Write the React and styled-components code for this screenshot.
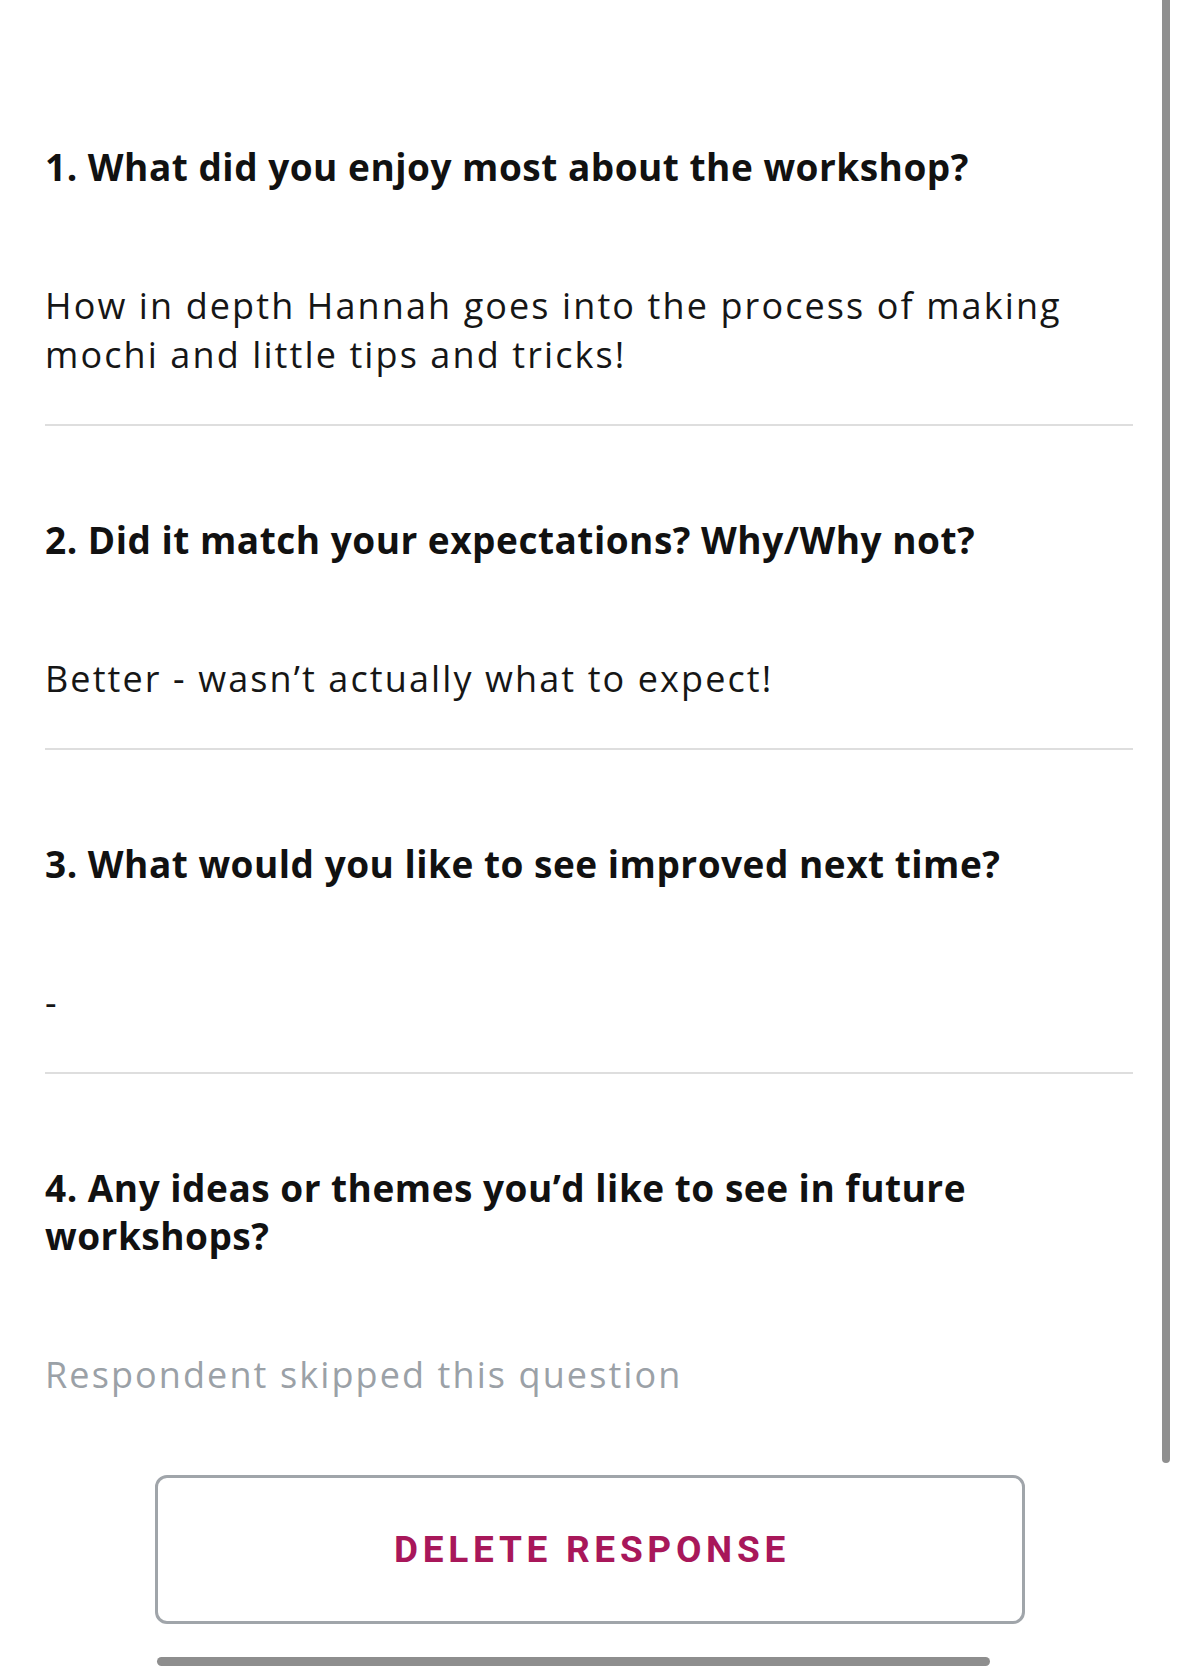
import React from "react";
import styled, { createGlobalStyle } from "styled-components";

const GlobalStyle = createGlobalStyle`
  html, body {
    margin: 0;
    padding: 0;
    background: #ffffff;
  }
  body {
    font-family: "Open Sans", "Noto Sans", sans-serif;
    -webkit-font-smoothing: antialiased;
  }
`;

const Screen = styled.div`
  position: relative;
  width: 1179px;
  min-height: 1675px;
  overflow: hidden;
  background: #ffffff;
  display: flex;
  flex-direction: column;
  padding-top: 53px;
  box-sizing: border-box;
`;

const QuestionList = styled.div`
  display: flex;
  flex-direction: column;
  padding: 0 46px 0 45px;
`;

const Question = styled.section`
  display: flex;
  flex-direction: column;
  padding: 90px 0 ${(p) => (p.$last ? "0" : "45px")};
  border-bottom: ${(p) => (p.$last ? "none" : "2px solid #dedede")};
`;

const Heading = styled.h2`
  margin: 0;
  font-family: "Open Sans", "Noto Sans", sans-serif;
  font-weight: 700;
  font-size: 37px;
  line-height: 48px;
  letter-spacing: 0.5px;
  color: #111111;
`;

const Answer = styled.p`
  margin: 90px 0 0;
  font-family: "Open Sans", "Noto Sans", sans-serif;
  font-weight: 400;
  font-size: 36px;
  line-height: 49px;
  letter-spacing: 2.1px;
  color: ${(p) => (p.$skipped ? "#9ba1a7" : "#161616")};
`;

const Footer = styled.div`
  display: flex;
  justify-content: center;
  margin-top: 76px;
`;

const DeleteButton = styled.button`
  width: 870px;
  height: 149px;
  box-sizing: border-box;
  border: 3px solid #a0a5aa;
  border-radius: 12px;
  background: #ffffff;
  display: flex;
  align-items: center;
  justify-content: center;
  padding: 0 0 0 5px;
  font-family: Roboto, "Open Sans", sans-serif;
  font-weight: 700;
  font-size: 37px;
  letter-spacing: 4.7px;
  color: #a8175a;
  text-transform: uppercase;
  cursor: pointer;
`;

const ScrollIndicator = styled.div`
  position: absolute;
  left: 1162px;
  top: -6px;
  width: 8px;
  height: 1469px;
  border-radius: 4px;
  background: #8f8f8f;
`;

const HomeIndicator = styled.div`
  position: absolute;
  left: 157px;
  top: 1657px;
  width: 833px;
  height: 9px;
  border-radius: 5px;
  background: #8e8e8e;
`;

const questions = [
  {
    q: "1. What did you enjoy most about the workshop?",
    a: "How in depth Hannah goes into the process of making mochi and little tips and tricks!",
  },
  {
    q: "2. Did it match your expectations? Why/Why not?",
    a: "Better - wasn\u2019t actually what to expect!",
  },
  {
    q: "3. What would you like to see improved next time?",
    a: "-",
  },
  {
    q: "4. Any ideas or themes you\u2019d like to see in future workshops?",
    a: "Respondent skipped this question",
    skipped: true,
  },
];

export default function App() {
  return (
    <>
      <GlobalStyle />
      <Screen>
        <QuestionList>
          {questions.map((item, i) => (
            <Question key={i} $last={i === questions.length - 1}>
              <Heading>{item.q}</Heading>
              <Answer $skipped={item.skipped}>{item.a}</Answer>
            </Question>
          ))}
        </QuestionList>
        <Footer>
          <DeleteButton type="button">Delete Response</DeleteButton>
        </Footer>
        <ScrollIndicator />
        <HomeIndicator />
      </Screen>
    </>
  );
}
